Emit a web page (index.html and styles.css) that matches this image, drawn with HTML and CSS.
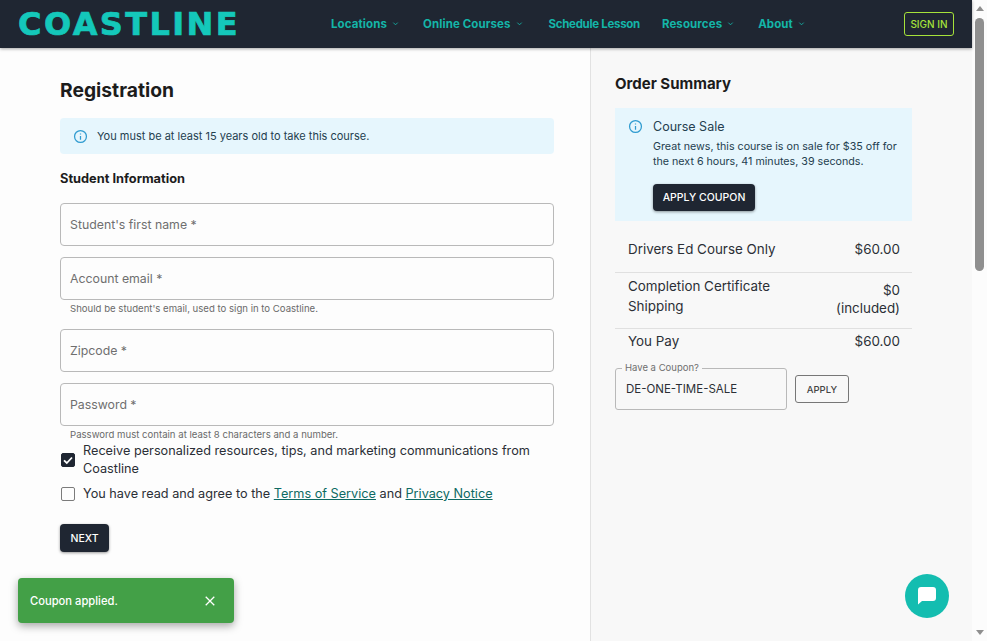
FILE: index.html
```html
<!DOCTYPE html>
<html lang="en">
<head>
  <meta charset="UTF-8" />
  <title>Coastline Registration</title>
  <link rel="stylesheet" href="styles.css">
</head>
<body>
  <div class="page">
    <header class="topbar">
      <div class="logo">COASTLINE</div>
      <nav class="nav">
        <a class="nav-item">Locations <svg class="chev" viewBox="0 0 8 8"><path d="M1.5 3l2.5 2.5L6.500 3"/></svg></a>
        <a class="nav-item">Online Courses <svg class="chev" viewBox="0 0 8 8"><path d="M1.5 3l2.5 2.5L6.500 3"/></svg></a>
        <a class="nav-item nav-item-tight">Schedule Lesson</a>
        <a class="nav-item">Resources <svg class="chev" viewBox="0 0 8 8"><path d="M1.5 3l2.5 2.5L6.500 3"/></svg></a>
        <a class="nav-item">About <svg class="chev" viewBox="0 0 8 8"><path d="M1.5 3l2.5 2.5L6.500 3"/></svg></a>
      </nav>
      <button class="signin">SIGN IN</button>
    </header>

    <main class="main">
      <section class="form-col">
        <h1 class="title">Registration</h1>
        <div class="alert">
          <svg class="info" viewBox="0 0 24 24"><circle cx="12" cy="12" r="9.500"/><path d="M12 11v6M12 7v1.800"/></svg>
          <span>You must be at least 15 years old to take this course.</span>
        </div>
        <h2 class="subtitle">Student Information</h2>

        <div class="field">Student's first name *</div>
        <div class="field">Account email *</div>
        <div class="helper">Should be student's email, used to sign in to Coastline.</div>
        <div class="field">Zipcode *</div>
        <div class="field">Password *</div>
        <div class="helper helper-tight">Password must contain at least 8 characters and a number.</div>

        <div class="check-row">
          <span class="box box-on"><svg viewBox="0 0 14 14"><path d="M3 7.300l2.800 2.700L11 4.500"/></svg></span>
          <span>Receive personalized resources, tips, and marketing communications from Coastline</span>
        </div>
        <div class="check-row">
          <span class="box"></span>
          <span>You have read and agree to the <a class="link">Terms of Service</a> and <a class="link">Privacy Notice</a></span>
        </div>
        <button class="btn-dark btn-next">NEXT</button>
      </section>

      <aside class="summary-col">
        <h2 class="summary-title">Order Summary</h2>
        <div class="sale">
          <svg class="info" viewBox="0 0 24 24"><circle cx="12" cy="12" r="9.500"/><path d="M12 11v6M12 7v1.800"/></svg>
          <div>
            <div class="sale-head">Course Sale</div>
            <p class="sale-text">Great news, this course is on sale for $35 off for the next 6 hours, 41 minutes, 39 seconds.</p>
            <button class="btn-dark btn-coupon">APPLY COUPON</button>
          </div>
        </div>
        <div class="line line-first"><span>Drivers Ed Course Only</span><span class="price">$60.00</span></div>
        <div class="line line-mid"><span class="line-name">Completion Certificate Shipping</span><span class="price price-wrap">$0 (included)</span></div>
        <div class="line line-last"><span>You Pay</span><span class="price">$60.00</span></div>
        <div class="coupon-row">
          <fieldset class="coupon">
            <legend>Have a Coupon?</legend>
            <span>DE-ONE-TIME-SALE</span>
          </fieldset>
          <button class="btn-outline">APPLY</button>
        </div>
      </aside>
    </main>
  </div>

  <div class="scrollbar">
    <span class="arrow arrow-up"></span>
    <span class="thumb"></span>
    <span class="arrow arrow-down"></span>
  </div>

  <div class="toast">
    <span>Coupon applied.</span>
    <svg viewBox="0 0 14 14"><path d="M2 2l10 10M12 2L2 12"/></svg>
  </div>

  <button class="chat">
    <svg viewBox="0 0 24 24"><path d="M6 3h12a3 3 0 0 1 3 3v8a3 3 0 0 1-3 3H7l-4 3.500V6a3 3 0 0 1 3-3z"/></svg>
  </button>
</body>
</html>
```

FILE: styles.css
```css
* {
  box-sizing: border-box;
}
body {
  font-family: Inter, "Noto Sans", sans-serif;
  margin: 0;
  height: 641px;
  overflow: hidden;
  display: flex;
  color: #2b2f36;
  background: #fff;
}
.page {
  width: 972px;
  height: 641px;
  display: flex;
  flex-direction: column;
}

/* top bar */
.topbar {
  height: 48px;
  flex: none;
  background: #1f2632;
  box-shadow: 0 1px 3px rgba(0, 0, 0, 0.35);
  display: flex;
  align-items: center;
  padding: 0 18px;
  position: relative;
}
.logo {
  width: 313px;
  font-family: "DejaVu Sans", sans-serif;
  font-size: 32px;
  line-height: 44px;
  font-weight: 700;
  letter-spacing: 2.400px;
  color: #14c8ba;
  -webkit-text-stroke: 0.7px #14c8ba;
}
.nav {
  display: flex;
  gap: 24px;
  flex: 1;
  margin-top: -1px;
}
.nav-item {
  font-size: 11.500px;
  font-weight: 700;
  letter-spacing: 0.1px;
  color: #14b5a8;
  display: flex;
  align-items: center;
  gap: 5px;
}
.nav-item-tight {
  letter-spacing: -0.3px;
  margin: 0 -2px 0 2px;
}
.chev {
  width: 7px;
  height: 7px;
  fill: none;
  stroke: #14b5a8;
  stroke-width: 1;
}
.signin {
  width: 50px;
  height: 24px;
  padding: 0;
  background: transparent;
  border: 1px solid #a6e23a;
  border-radius: 3px;
  color: #a6e23a;
  font: 500 10px Inter, sans-serif;
}

/* columns */
.main {
  flex: 1;
  display: flex;
  min-height: 0;
}
.form-col {
  width: 591px;
  padding: 30px 36px 0 60px;
  background: #fdfdfd;
  border-right: 1px solid #e2e2e2;
}
.summary-col {
  flex: 1;
  padding: 27px 60px 0 24px;
  background: #f8f8f8;
}
.title {
  margin: 0;
  font-size: 19.300px;
  line-height: 24px;
  font-weight: 700;
  color: #1c1c1c;
}
.alert {
  margin-top: 16px;
  height: 36px;
  display: flex;
  align-items: center;
  gap: 9px;
  padding-left: 13px;
  background: #e6f6fd;
  border-radius: 4px;
  font-size: 11px;
  color: #24404f;
}
.info {
  width: 15px;
  height: 15px;
  flex: none;
  fill: none;
  stroke: #2f9bd0;
  stroke-width: 2;
}
.subtitle {
  margin: 17px 0 16px;
  font-size: 12.800px;
  line-height: 16px;
  font-weight: 700;
  color: #1c1c1c;
}
.field {
  height: 43px;
  margin-bottom: 11px;
  padding-left: 9px;
  display: flex;
  align-items: center;
  border: 1px solid #b9b9b9;
  border-radius: 4px;
  font-size: 12.300px;
  color: #6f6f6f;
}
.helper {
  margin: -9px 0 13px 10px;
  font-size: 9.600px;
  line-height: 14px;
  color: #6a6a6a;
}
.helper-tight {
  margin-bottom: 0;
}
.check-row {
  display: flex;
  align-items: center;
  gap: 8px;
  margin: 0 0 7px 1px;
  font-size: 12.700px;
  line-height: 18px;
  color: #2b2f36;
}
.box {
  width: 14px;
  height: 14px;
  flex: none;
  border: 1.500px solid #7b7b7b;
  border-radius: 2px;
}
.box-on {
  background: #1f2632;
  border-color: #1f2632;
  padding: 0;
}
.box-on svg {
  display: block;
  fill: none;
  stroke: #fff;
  stroke-width: 1.800;
  margin: -1.500px;
  width: 14px;
  height: 14px;
}
.link {
  color: #0e6a63;
  text-decoration: underline;
}
.btn-dark {
  background: #1f2632;
  color: #fff;
  border: none;
  border-radius: 4px;
  font: 500 10.500px Inter, sans-serif;
  box-shadow: 0 1px 3px rgba(0, 0, 0, 0.4);
}
.btn-next {
  display: block;
  margin-top: 21px;
  width: 49px;
  height: 28px;
}

/* order summary */
.summary-title {
  margin: 0 0 15px;
  font-size: 15px;
  line-height: 18px;
  font-weight: 700;
  color: #1c1c1c;
}
.sale {
  height: 113px;
  padding: 11px 12px 0 13px;
  display: flex;
  gap: 10px;
  background: #e6f6fd;
  font-size: 10.700px;
  color: #24404f;
}
.sale-head {
  font-size: 12.500px;
  line-height: 15px;
}
.sale-text {
  margin: 5px 0 15px;
  line-height: 15px;
}
.btn-coupon {
  width: 102px;
  height: 27px;
}
.line {
  display: flex;
  justify-content: space-between;
  align-items: flex-start;
  padding: 0 12px 0 13px;
  font-size: 13.400px;
  line-height: 18px;
  color: #2b2f36;
}
.line-first {
  height: 52px;
  padding-top: 19px;
  border-bottom: 1px solid #e0e0e0;
}
.line-mid {
  height: 56px;
  padding-top: 3px;
  line-height: 20px;
  border-bottom: 1px solid #e0e0e0;
}
.line-last {
  height: 26px;
  padding-top: 3px;
}
.line-name {
  width: 170px;
}
.price-wrap {
  width: 72px;
  margin-top: 5px;
  line-height: 18px;
  text-align: right;
}
.coupon-row {
  display: flex;
  align-items: center;
  gap: 8px;
  margin-top: 8px;
}
.coupon {
  margin: 0;
  width: 172px;
  height: 47px;
  padding: 9px 10px 0;
  border: 1px solid #b9b9b9;
  border-radius: 3px;
  font-size: 11.500px;
}
.coupon legend {
  padding: 0 3px;
  margin-left: -4px;
  font-size: 9.500px;
  line-height: 10px;
  color: #6f6f6f;
}
.btn-outline {
  width: 54px;
  height: 28px;
  margin-top: 5px;
  padding: 0;
  background: transparent;
  border: 1px solid #777;
  border-radius: 3px;
  font: 500 9.500px Inter, sans-serif;
  color: #444;
}

/* scrollbar */
.scrollbar {
  width: 15px;
  height: 641px;
  background: #fcfcfc;
  display: flex;
  flex-direction: column;
  align-items: center;
  padding: 6px 0;
}
.thumb {
  width: 9px;
  height: 253px;
  margin-top: 7px;
  background: #8f8f8f;
  border-radius: 5px;
}
.arrow {
  width: 0;
  height: 0;
  border-left: 4px solid transparent;
  border-right: 4px solid transparent;
}
.arrow-up {
  border-bottom: 5px solid #8f8f8f;
}
.arrow-down {
  margin-top: auto;
  border-top: 5px solid #8f8f8f;
}

/* floating bits */
.toast {
  position: absolute;
  left: 18px;
  top: 578px;
  width: 216px;
  height: 45px;
  padding: 0 18px 0 12px;
  display: flex;
  align-items: center;
  justify-content: space-between;
  background: #43a047;
  border-radius: 4px;
  box-shadow: 0 3px 8px rgba(0, 0, 0, 0.35);
  color: #fff;
  font-size: 11.200px;
  font-weight: 500;
}
.toast svg {
  width: 12px;
  height: 12px;
  fill: none;
  stroke: #fff;
  stroke-width: 1.500;
}
.chat {
  position: absolute;
  left: 905px;
  top: 574px;
  width: 44px;
  height: 44px;
  padding: 0;
  border: none;
  border-radius: 50%;
  background: #14bdb0;
  display: flex;
  align-items: center;
  justify-content: center;
}
.chat svg {
  width: 24px;
  height: 24px;
  fill: #fff;
}
```
